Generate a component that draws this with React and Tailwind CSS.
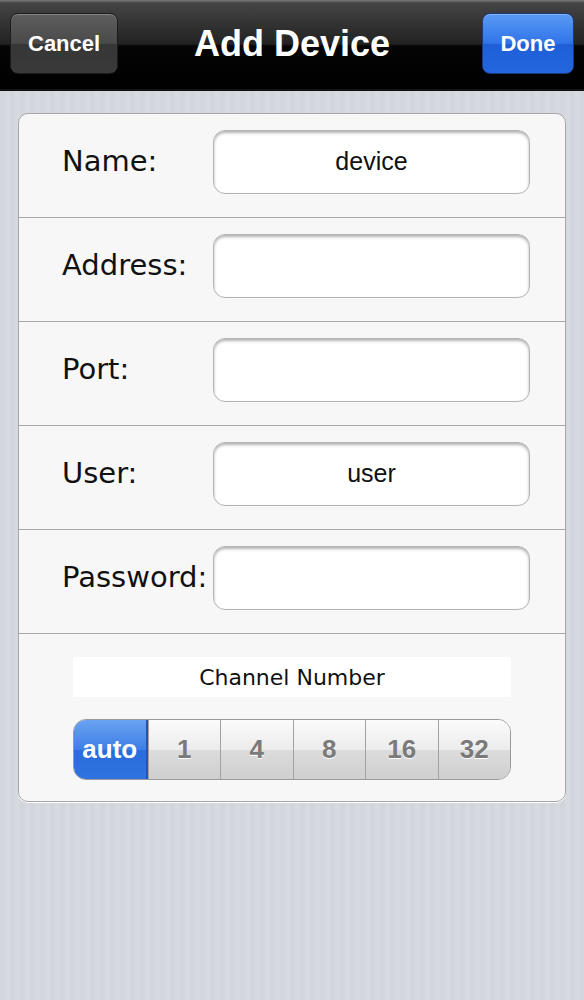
import React from "react";

const rows = [
  { label: "Name:", value: "device" },
  { label: "Address:", value: "" },
  { label: "Port:", value: "" },
  { label: "User:", value: "user" },
  { label: "Password:", value: "" },
];

const channels = ["auto", "1", "4", "8", "16", "32"];

const NavButton = ({ children, blue }) => (
  <button
    className={`h-[61px] rounded-[8px] border px-[17px] text-[22px] font-bold text-white shadow-[inset_0_1px_0_rgba(255,255,255,0.25)] ${
      blue
        ? "w-[92px] border-[#1b3a78] bg-[linear-gradient(#5b9af5,#2f74e8_50%,#1e5fd8_51%,#2366de)]"
        : "w-[108px] border-[#1c1c1c] bg-[linear-gradient(#5e5e5e,#494949_50%,#363636_51%,#3a3a3a)]"
    }`}
    style={{ fontFamily: '"Liberation Sans", Arial, sans-serif' }}
  >
    {children}
  </button>
);

export default function App() {
  return (
    <div className="min-h-[1000px] w-[584px] bg-[repeating-linear-gradient(90deg,#d2d5dc_0px,#d2d5dc_5px,#d6d9e0_5px,#d6d9e0_10px)]">
      {/* Nav bar */}
      <div className="flex h-[91px] items-center justify-between border-b-2 border-[#111] bg-[linear-gradient(#7a7a7a_0px,#444_3px,#222_44px,#050505_46px,#000)] px-[10px] pb-[2px]">
        <NavButton>Cancel</NavButton>
        <h1
          className="ml-[-16px] text-[36px] font-bold text-white"
          style={{ fontFamily: '"Liberation Sans", Arial, sans-serif' }}
        >
          Add Device
        </h1>
        <NavButton blue>Done</NavButton>
      </div>

      {/* Form card */}
      <div
        className="mx-[18px] mt-[22px] overflow-hidden rounded-[10px] border border-[#a6a6a6] bg-[#f7f7f7] shadow-[0_1px_0_#fff]"
        style={{ fontFamily: '"DejaVu Sans", Verdana, sans-serif' }}
      >
        {rows.map((row) => (
          <div
            key={row.label}
            className="flex h-[104px] items-center border-b border-[#a9a9a9] pb-[8px] pl-[43px] pr-[35px]"
          >
            <span className="w-[151px] shrink-0 text-[29px] text-[#111]">{row.label}</span>
            <div
              className="flex h-[64px] flex-1 items-center justify-center rounded-[12px] border border-[#b4b4b4] bg-white text-[25px] text-[#111] shadow-[inset_0_2px_3px_rgba(0,0,0,0.3)]"
              style={{ fontFamily: '"Liberation Sans", Arial, sans-serif' }}
            >
              {row.value}
            </div>
          </div>
        ))}

        <div className="flex flex-col gap-[22px] px-[54px] pb-[21px] pt-[23px]">
          <div className="flex h-[40px] items-center justify-center bg-white text-[22px] text-[#111]">
            Channel Number
          </div>
          <div
            className="flex h-[61px] overflow-hidden rounded-[13px] border border-[#9a9a9a]"
            style={{ fontFamily: '"Liberation Sans", Arial, sans-serif' }}
          >
            {channels.map((c, i) => (
              <div
                key={c}
                className={`flex flex-1 items-center justify-center text-[26px] font-bold ${
                  i === 0
                    ? "border-r-2 border-[#1f57b8] bg-[linear-gradient(#6aa3f2,#3d7fe6_50%,#2a6cdc_51%,#2f72e0)] text-white"
                    : "border-l border-[#a2a2a2] bg-[linear-gradient(#fbfbfb,#ececec_50%,#dcdcdc_51%,#cfcfcf)] text-[#7a7a7a] [text-shadow:0_1px_0_#fff] first-of-type:border-l-0"
                }`}
              >
                {c}
              </div>
            ))}
          </div>
        </div>
      </div>
    </div>
  );
}
